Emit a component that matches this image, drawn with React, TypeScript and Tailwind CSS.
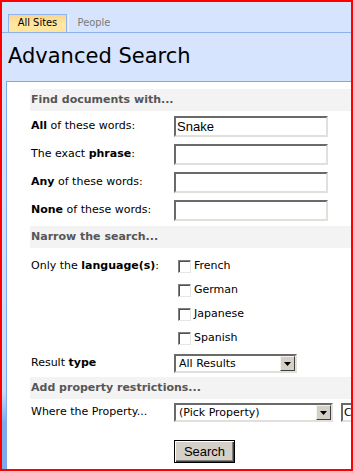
export default function App() {
  const label = (bold: string, rest: string, boldFirst = true) =>
    boldFirst ? (
      <>
        <b>{bold}</b>
        {rest}
      </>
    ) : (
      <>
        {rest}
        <b>{bold}</b>:
      </>
    );

  const Input = ({ value = '' }: { value?: string }) => (
    <div className="h-[21px] w-[154px] border-2 border-t-[#6a6a6a] border-l-[#6a6a6a] border-r-[#e2e0da] border-b-[#e2e0da] bg-white pl-[1px] flex items-center font-['Liberation_Sans',Arial,sans-serif] text-[13px] leading-none">
      {value}
    </div>
  );

  const Select = ({ text, width, pad = 'pl-[3px]' }: { text: string; width: string; pad?: string }) => (
    <div
      className={`${width} shrink-0 h-[19px] border-2 border-t-[#6a6a6a] border-l-[#6a6a6a] border-r-[#e2e0da] border-b-[#e2e0da] bg-white flex items-center`}
    >
      <span className={`flex-1 ${pad} whitespace-nowrap overflow-hidden text-[11px] leading-none`}>{text}</span>
      <div className="w-[15px] h-[15px] bg-[#d4d0c8] border border-t-[#f4f3ee] border-l-[#f4f3ee] border-r-[#404040] border-b-[#404040] flex items-center justify-center">
        <svg width="7" height="4" viewBox="0 0 7 4">
          <path d="M0 0h7L3.5 4z" fill="#000" />
        </svg>
      </div>
    </div>
  );

  const Band = ({ children }: { children: React.ReactNode }) => (
    <div className="h-[22px] flex items-center pl-[1px] bg-[#f3f3f3] font-bold text-[#565656] whitespace-nowrap">
      {children}
    </div>
  );

  const Checkbox = ({ text }: { text: string }) => (
    <div className="h-[24px] flex items-center pl-[4px]">
      <span className="w-[13px] h-[13px] bg-white border border-t-[#808080] border-l-[#808080] border-r-[#e6e6e6] border-b-[#e6e6e6] shadow-[inset_1px_1px_0_#505050]" />
      <span className="ml-[3px]">{text}</span>
    </div>
  );

  return (
    <div className="w-[353px] h-[471px] border-2 border-[#ff0000] bg-[#d6e4fd] overflow-hidden flex flex-col font-['DejaVu_Sans',Verdana,sans-serif] text-[11px] text-black">
      <div className="mt-[12px] h-[19px] flex items-end border-b border-[#8db2ee] pl-[6px] shrink-0">
        <div className="h-[18px] w-[59px] border border-b-0 border-[#91b4ee] bg-[linear-gradient(#f9d58c,#ffe8a3_55%,#ffe59b)] flex items-center justify-center font-['DejaVu_Sans_Condensed','DejaVu_Sans',sans-serif] text-[11px]">
          All Sites
        </div>
        <div className="h-[17px] w-px bg-[#eef4ff] ml-[1px]" />
        <div className="h-[18px] w-[50px] flex items-center justify-center font-['DejaVu_Sans_Condensed','DejaVu_Sans',sans-serif] text-[11px] text-[#7a7a7a]">
          People
        </div>
      </div>

      <div className="mt-[13px] pl-[6px] text-[21px] leading-[21px] shrink-0">Advanced Search</div>

      <div className="mt-[14px] flex-1 flex bg-[linear-gradient(#d6e4fd,#c9dbf7_80%,#7eaaee_88%,#7eaaee)]">
        <div className="ml-[4px] flex-1 border-t border-l border-[#7ea6e8] bg-white pl-[23px] pt-[7px] flex flex-col">
          <Band>Find documents with...</Band>

          <div className="mt-[5px] flex flex-col gap-[7px]">
            <div className="h-[21px] flex items-center">
              <div className="w-[144px] pl-[1px]">{label('All', ' of these words:')}</div>
              <Input value="Snake" />
            </div>
            <div className="h-[21px] flex items-center">
              <div className="w-[144px] pl-[1px]">{label('phrase', 'The exact ', false)}</div>
              <Input />
            </div>
            <div className="h-[21px] flex items-center">
              <div className="w-[144px] pl-[1px]">{label('Any', ' of these words:')}</div>
              <Input />
            </div>
            <div className="h-[21px] flex items-center">
              <div className="w-[144px] pl-[1px]">{label('None', ' of these words:')}</div>
              <Input />
            </div>
          </div>

          <div className="mt-[5px]">
            <Band>Narrow the search...</Band>
          </div>

          <div className="mt-[6px] flex">
            <div className="w-[144px] pl-[1px] h-[24px] flex items-center">
              <span>
                Only the <b>language(s)</b>:
              </span>
            </div>
            <div className="flex flex-col">
              <Checkbox text="French" />
              <Checkbox text="German" />
              <Checkbox text="Japanese" />
              <Checkbox text="Spanish" />
            </div>
          </div>

          <div className="mt-[4px] h-[19px] flex items-center">
            <div className="w-[144px] pl-[1px]">
              Result <b>type</b>
            </div>
            <Select text="All Results" width="w-[123px]" />
          </div>

          <div className="mt-[4px]">
            <Band>Add property restrictions...</Band>
          </div>

          <div className="mt-[4px] h-[19px] flex items-center">
            <div className="w-[144px] shrink-0 pl-[1px] whitespace-nowrap">Where the Property...</div>
            <Select text="(Pick Property)" width="w-[159px]" />
            <div className="ml-[8px]">
              <Select text="Contains" width="w-[100px]" pad="pl-[1px]" />
            </div>
          </div>

          <div className="mt-[18px] pl-[144px]">
            <button className="w-[61px] h-[23px] bg-[#d4d0c8] border border-black shadow-[inset_1px_1px_0_#ffffff,inset_-1px_-1px_0_#404040,inset_-2px_-2px_0_#808080] font-['Liberation_Sans',Arial,sans-serif] text-[13px] leading-none">
              Search
            </button>
          </div>
        </div>
      </div>
    </div>
  );
}
